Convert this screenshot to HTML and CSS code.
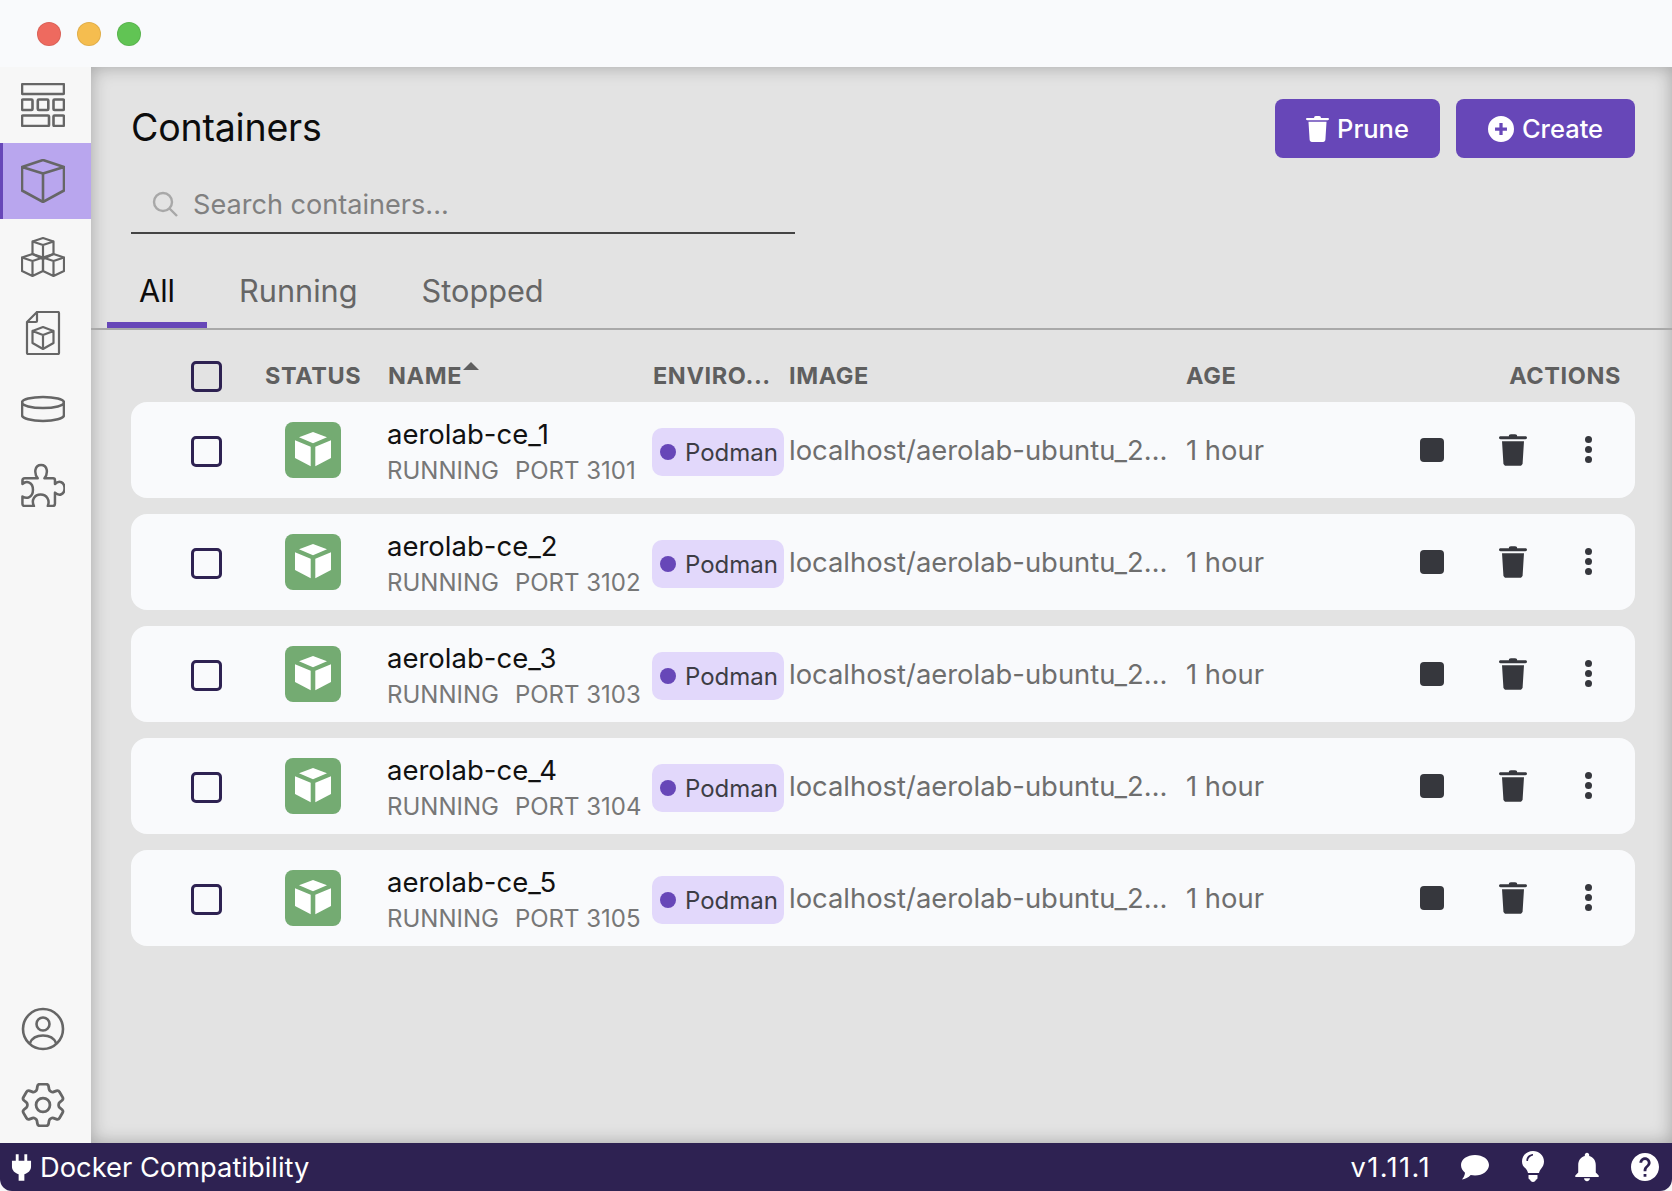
FILE: index.html
```html
<!DOCTYPE html>
<html lang="en">
<head>
    <meta charset="UTF-8">
    <title>Podman Desktop - Containers</title>
    <link rel="stylesheet" href="styles.css">
</head>
<body>
    <svg class="sprite" xmlns="http://www.w3.org/2000/svg">
        <symbol id="i-box" viewBox="0 0 36 35"><path d="M18 0l14 5.300-14 6-14-6zM0 8.300l15.700 6.400v19.600L0 26zM36 8.300l-15.700 6.400v19.600L36 26z"/></symbol>
        <symbol id="i-trash" viewBox="1.800 1.400 20.400 22" preserveAspectRatio="none"><path d="M9 2.600c0-.9.9-1.100 3-1.100s3 .2 3 1.100v.4h6c.8 0 1.200.5 1.200 1s-.4 1-1.200 1H3c-.8 0-1.200-.5-1.200-1s.4-1 1.200-1h6z"/><path d="M4 6.300h16l-1 15.200c-.1 1-.9 1.800-2 1.800H7c-1.100 0-1.900-.8-2-1.800z"/></symbol>
    </svg>

    <div class="titlebar">
        <span class="light light-red"></span>
        <span class="light light-yellow"></span>
        <span class="light light-green"></span>
    </div>

    <div class="app">
        <nav class="sidebar">
            <a class="nav-item">
                <svg class="nav-icon" viewBox="0 0 44 44"><rect x="1" y="1" width="42" height="10" rx="1"/><rect x="1" y="16.500" width="10.500" height="10.500" rx="1"/><rect x="16.800" y="16.500" width="10.500" height="10.500" rx="1"/><rect x="32.500" y="16.500" width="10.500" height="10.500" rx="1"/><rect x="1" y="32.500" width="27" height="10.500" rx="1"/><rect x="32.500" y="32.500" width="10.500" height="10.500" rx="1"/></svg>
            </a>
            <a class="nav-item nav-active">
                <svg class="nav-icon" viewBox="0 0 44 44"><path d="M22 1 43 8v23.500L22 43 1 31.500V8zM1 8l21 6.500L43 8M22 14.500V43"/></svg>
            </a>
            <a class="nav-item">
                <svg class="nav-icon thin" viewBox="0 0 44 44"><path d="M22 3 32.500 6.500v12.500L22 24 11.500 19V6.500zM11.500 6.500 22 10l10.500-3.500M22 10v14"/><path d="M11.500 19 22 22.500V36l-10.500 5L1 36V22.500zM1 22.500 11.500 26 22 22.500M11.500 26v15"/><path d="M32.500 19 43 22.500V36l-10.500 5L22 36V22.500zM22 22.500 32.500 26 43 22.500M32.500 26v15"/></svg>
            </a>
            <a class="nav-item">
                <svg class="nav-icon thin" viewBox="0 0 44 44"><path d="M16 1h21a1 1 0 0 1 1 1v40a1 1 0 0 1-1 1H7a1 1 0 0 1-1-1V11zM6 11h9a1 1 0 0 0 1-1V1"/><path d="M22 16l10.500 4v12L22 38l-10.500-6V20zM11.500 20 22 24l10.500-4M22 24v14"/></svg>
            </a>
            <a class="nav-item">
                <svg class="nav-icon" viewBox="0 0 44 44"><ellipse cx="22" cy="15.500" rx="21" ry="5.500"/><path d="M1 15.500V28c0 3.500 9.500 6 21 6s21-2.500 21-6V15.500"/></svg>
            </a>
            <a class="nav-item">
                <svg class="nav-icon" viewBox="0 1 44 46"><path d="M16.500 17C12.500 12 13 3 20 3s7.500 9 3.500 14h9q2 0 2 2v4c4.500-4.500 10-2 10 4.500s-5.500 8.500-10 4.500v11.500q0 2.500-2.500 2.500h-5c2.500-6-1-12-7.500-12s-10 6-7 12H3q-2.500 0-2.500-2.500V36c4.500 3 11 1 11-7s-6.500-10-11-6v-3.500Q.5 17 3 17z"/></svg>
            </a>
            <div class="nav-spacer"></div>
            <a class="nav-item">
                <svg class="nav-icon" viewBox="0 0 44 44"><circle cx="22" cy="22" r="20"/><circle cx="22" cy="17" r="6.500"/><path d="M9 36c2-5 7-7.500 13-7.500S33 31 35 36"/></svg>
            </a>
            <a class="nav-item">
                <svg class="nav-icon" viewBox="2.500 2.500 19 19"><path class="fine" d="M9.594 3.940c.09-.542.56-.94 1.110-.94h2.593c.55 0 1.020.398 1.110.94l.213 1.281c.063.374.313.686.645.87.074.04.147.083.22.127.324.196.72.257 1.075.124l1.217-.456a1.125 1.125 0 0 1 1.370.49l1.296 2.247a1.125 1.125 0 0 1-.26 1.431l-1.003.827c-.293.24-.438.613-.431.992a6.759 6.759 0 0 1 0 .255c-.007.378.138.75.43.99l1.005.828c.424.35.534.954.26 1.430l-1.298 2.247a1.125 1.125 0 0 1-1.369.491l-1.217-.456c-.355-.133-.75-.072-1.076.124a6.570 6.570 0 0 1-.22.128c-.331.183-.581.495-.644.869l-.213 1.280c-.09.543-.56.941-1.110.941h-2.594c-.55 0-1.020-.398-1.110-.94l-.213-1.281c-.062-.374-.312-.686-.644-.87a6.520 6.520 0 0 1-.22-.127c-.325-.196-.72-.257-1.076-.124l-1.217.456a1.125 1.125 0 0 1-1.369-.49l-1.297-2.247a1.125 1.125 0 0 1 .26-1.431l1.004-.827c.292-.24.437-.613.43-.992a6.932 6.932 0 0 1 0-.255c.007-.378-.138-.75-.43-.99l-1.004-.828a1.125 1.125 0 0 1-.26-1.430l1.297-2.247a1.125 1.125 0 0 1 1.370-.491l1.216.456c.356.133.751.072 1.076-.124.072-.044.146-.087.22-.128.332-.183.582-.495.644-.869z"/><circle class="fine" cx="12" cy="12" r="3"/></svg>
            </a>
        </nav>

        <main class="content">
            <div class="page-head">
                <h1 class="page-title">Containers</h1>
                <div class="head-buttons">
                    <button class="btn btn-prune"><svg class="btn-trash"><use href="#i-trash"/></svg>Prune</button>
                    <button class="btn btn-create">
                        <svg class="btn-icon" viewBox="0 0 24 24"><path fill-rule="evenodd" d="M12 0a12 12 0 1 1 0 24 12 12 0 0 1 0-24zm-1.500 6.500v4H6.500v3h4v4h3v-4h4v-3h-4v-4z"/></svg>Create
                    </button>
                </div>
            </div>

            <div class="search">
                <svg class="search-icon" viewBox="0 0 26 26"><circle cx="11" cy="11" r="9"/><path d="M17.500 17.500 25 25"/></svg>
                <span class="search-text">Search containers...</span>
            </div>

            <div class="tabs">
                <span class="tab tab-active">All</span>
                <span class="tab">Running</span>
                <span class="tab">Stopped</span>
            </div>

            <div class="table-head cols">
                <span class="check"></span>
                <span class="head-cell">STATUS</span>
                <span class="head-cell name-head">NAME<i class="sort-arrow"></i></span>
                <span class="head-cell">ENVIRO...</span>
                <span class="head-cell">IMAGE</span>
                <span class="head-cell">AGE</span>
                <span class="head-cell actions-head">ACTIONS</span>
            </div>

            <div class="rows">
                <div class="row cols">
                    <span class="check"></span>
                    <span class="status-icon"><svg><use href="#i-box"/></svg></span>
                    <div class="name-cell">
                        <div class="name">aerolab-ce_1</div>
                        <div class="sub"><span>RUNNING</span><span>PORT 3101</span></div>
                    </div>
                    <span class="badge"><i class="dot"></i>Podman</span>
                    <span class="image">localhost/aerolab-ubuntu_22.04:latest</span>
                    <span class="age">1 hour</span>
                    <div class="actions">
                        <i class="stop"></i>
                        <svg class="act-trash"><use href="#i-trash"/></svg>
                        <span class="kebab"><i></i><i></i><i></i></span>
                    </div>
                </div>
                <div class="row cols">
                    <span class="check"></span>
                    <span class="status-icon"><svg><use href="#i-box"/></svg></span>
                    <div class="name-cell">
                        <div class="name">aerolab-ce_2</div>
                        <div class="sub"><span>RUNNING</span><span>PORT 3102</span></div>
                    </div>
                    <span class="badge"><i class="dot"></i>Podman</span>
                    <span class="image">localhost/aerolab-ubuntu_22.04:latest</span>
                    <span class="age">1 hour</span>
                    <div class="actions">
                        <i class="stop"></i>
                        <svg class="act-trash"><use href="#i-trash"/></svg>
                        <span class="kebab"><i></i><i></i><i></i></span>
                    </div>
                </div>
                <div class="row cols">
                    <span class="check"></span>
                    <span class="status-icon"><svg><use href="#i-box"/></svg></span>
                    <div class="name-cell">
                        <div class="name">aerolab-ce_3</div>
                        <div class="sub"><span>RUNNING</span><span>PORT 3103</span></div>
                    </div>
                    <span class="badge"><i class="dot"></i>Podman</span>
                    <span class="image">localhost/aerolab-ubuntu_22.04:latest</span>
                    <span class="age">1 hour</span>
                    <div class="actions">
                        <i class="stop"></i>
                        <svg class="act-trash"><use href="#i-trash"/></svg>
                        <span class="kebab"><i></i><i></i><i></i></span>
                    </div>
                </div>
                <div class="row cols">
                    <span class="check"></span>
                    <span class="status-icon"><svg><use href="#i-box"/></svg></span>
                    <div class="name-cell">
                        <div class="name">aerolab-ce_4</div>
                        <div class="sub"><span>RUNNING</span><span>PORT 3104</span></div>
                    </div>
                    <span class="badge"><i class="dot"></i>Podman</span>
                    <span class="image">localhost/aerolab-ubuntu_22.04:latest</span>
                    <span class="age">1 hour</span>
                    <div class="actions">
                        <i class="stop"></i>
                        <svg class="act-trash"><use href="#i-trash"/></svg>
                        <span class="kebab"><i></i><i></i><i></i></span>
                    </div>
                </div>
                <div class="row cols">
                    <span class="check"></span>
                    <span class="status-icon"><svg><use href="#i-box"/></svg></span>
                    <div class="name-cell">
                        <div class="name">aerolab-ce_5</div>
                        <div class="sub"><span>RUNNING</span><span>PORT 3105</span></div>
                    </div>
                    <span class="badge"><i class="dot"></i>Podman</span>
                    <span class="image">localhost/aerolab-ubuntu_22.04:latest</span>
                    <span class="age">1 hour</span>
                    <div class="actions">
                        <i class="stop"></i>
                        <svg class="act-trash"><use href="#i-trash"/></svg>
                        <span class="kebab"><i></i><i></i><i></i></span>
                    </div>
                </div>
            </div>
        </main>
    </div>

    <footer class="statusbar">
        <svg class="plug" viewBox="0 0 22 28"><path d="M5 0h3v7h6V0h3v7h4v6c0 4-3 7-7 8v7h-6v-7c-4-1-7-4-7-8V7h4z"/></svg>
        <span class="compat">Docker Compatibility</span>
        <span class="version">v1.11.1</span>
        <svg class="foot-icon foot-comment" viewBox="0 0 28 25"><path d="M14 0c7.700 0 14 4.300 14 10s-6.300 10.500-14 10.500c-1.500 0-3-.2-4.300-.5-2.200 2.300-5.700 4.500-8.900 4.500 2-2.200 3-4.500 3.200-6.800C1.500 15.700 0 13 0 10 0 4.300 6.300 0 14 0z"/></svg>
        <svg class="foot-icon foot-bulb" viewBox="0 0 22 32"><path fill-rule="evenodd" d="M11 0c6 0 11 4.500 11 10.500 0 3-1.200 5-2.700 7-1 1.300-1.900 2.700-2.300 4.500H6c-.4-1.800-1.300-3.200-2.300-4.500C1.200 15.500 0 13.500 0 10.500 0 4.500 5 0 11 0zM6 10c0-2.700 2-5 5-5.500V3C6.500 3.500 4 6.500 4.500 10z"/><path d="M6.500 24h9v3c0 .8-.5 1.500-1.500 1.500-.3 1.500-1.500 2.500-3 2.500s-2.700-1-3-2.500c-1 0-1.500-.7-1.500-1.500z"/></svg>
        <svg class="foot-icon foot-bell" viewBox="4 2 16 20.500"><path d="M12 22c1.100 0 2-.9 2-2h-4c0 1.100.89 2 2 2zm6-6v-5c0-3.070-1.640-5.640-4.500-6.320V4c0-.83-.67-1.500-1.500-1.500s-1.500.67-1.500 1.500v.68C7.630 5.360 6 7.920 6 11v5l-2 2v1h16v-1l-2-2z"/></svg>
        <svg class="foot-icon foot-help" viewBox="2 2 20 20"><path d="M12 2C6.480 2 2 6.480 2 12s4.480 10 10 10 10-4.480 10-10S17.520 2 12 2zm1 17h-2v-2h2v2zm2.070-7.750-.9.92C13.450 12.900 13 13.500 13 15h-2v-.5c0-1.100.45-2.100 1.170-2.830l1.240-1.260c.37-.36.59-.86.59-1.410 0-1.100-.9-2-2-2s-2 .9-2 2H8c0-2.210 1.790-4 4-4s4 1.790 4 4c0 .88-.36 1.680-.93 2.250z"/></svg>
    </footer>
</body>
</html>
```
FILE: styles.css
```css
* {
    box-sizing: border-box;
}
html {
    background: #a9a9a9;
}
body {
    margin: 0;
    height: 1191px;
    display: flex;
    flex-direction: column;
    overflow: hidden;
    font-family: 'Inter', sans-serif;
    color: #666;
    background: #f7f7f7;
}
.sprite {
    display: none;
}

/* window chrome */
.titlebar {
    height: 67px;
    flex: none;
    display: flex;
    align-items: center;
    gap: 16px;
    padding-left: 37px;
    background: #f9fafc;
}
.light {
    width: 24px;
    height: 24px;
    border-radius: 50%;
    border: 1px solid rgba(0,0,0,0.08);
}
.light-red { background: #ee6a5f; }
.light-yellow { background: #f5bd4f; }
.light-green { background: #61c454; }

.app {
    flex: 1;
    display: flex;
    min-height: 0;
}

/* left nav */
.sidebar {
    width: 91px;
    flex: none;
    display: flex;
    flex-direction: column;
    background: #f7f7f7;
}
.nav-item {
    height: 76px;
    flex: none;
    display: flex;
    align-items: center;
    justify-content: center;
    padding-right: 5px;
}
.nav-active {
    background: #b9a6ee;
    border-left: 3px solid #6747b8;
    padding-right: 8px;
}
.nav-spacer {
    flex: 1;
}
.nav-icon {
    width: 44px;
    height: 44px;
    fill: none;
    stroke: #666;
    stroke-width: 2.6;
    stroke-linejoin: round;
    stroke-linecap: round;
}
.nav-icon.thin {
    stroke-width: 2.2;
}
.fine {
    stroke-width: 1.2;
}

/* main */
.content {
    flex: 1;
    min-width: 0;
    padding: 32px 37px 0 40px;
    background: #e3e3e3;
    box-shadow: inset 0 0 18px rgba(0,0,0,0.28);
}
.page-head {
    display: flex;
    justify-content: space-between;
    height: 59px;
}
.page-title {
    margin: 7px 0 0;
    font-size: 37.500px;
    line-height: 44px;
    font-weight: 400;
    color: #0c0c0c;
    letter-spacing: -0.2px;
}
.head-buttons {
    display: flex;
    gap: 16px;
}
.btn {
    height: 59px;
    display: flex;
    align-items: center;
    justify-content: center;
    gap: 8px;
    border: 0;
    border-radius: 8px;
    font: 500 25.500px 'Inter', sans-serif;
    color: #fff;
    background: #6747b8;
}
.btn-prune { width: 165px; }
.btn-create { width: 179px; }
.btn-icon {
    width: 26px;
    height: 26px;
    fill: #fff;
}
.btn-trash {
    width: 23px;
    height: 26px;
    fill: #fff;
}

.search {
    margin-top: 24px;
    width: 664px;
    height: 52px;
    display: flex;
    align-items: center;
    gap: 15px;
    padding: 0 0 6px 21px;
    border-bottom: 2px solid #444;
}
.search-icon {
    width: 26px;
    height: 26px;
    flex: none;
    fill: none;
    stroke: #a8a8a8;
    stroke-width: 2.4;
}
.search-text {
    font-size: 27.100px;
    color: #808080;
}

.tabs {
    margin: 25px -37px 0 -40px;
    height: 71px;
    display: flex;
    padding: 0 0 0 16px;
    border-bottom: 2px solid #a9a9a9;
}
.tab {
    padding: 12px 32px 0;
    line-height: 40px;
    font-size: 30.700px;
    color: #666;
}
.tab-active {
    width: 100px;
    padding: 12px 0 0;
    text-align: center;
    color: #0c0c0c;
    border-bottom: 6px solid #6747b8;
}

/* table */
.cols {
    display: grid;
    align-items: center;
}
.table-head {
    grid-template-columns: 134px 123px 265px 136px 397px 1fr 210px;
    height: 72px;
    padding-top: 18px;
    font-size: 23.500px;
    font-weight: 700;
    letter-spacing: 0.6px;
    color: #5f5f5f;
}
.table-head .check {
    margin-top: 2px;
}
.name-head {
    display: flex;
    align-items: flex-start;
    gap: 1px;
}
.sort-arrow {
    margin-top: 1px;
    width: 0;
    height: 0;
    border-left: 8px solid transparent;
    border-right: 8px solid transparent;
    border-bottom: 8px solid #5f5f5f;
}
.actions-head {
    text-align: right;
    padding-right: 14px;
}
.check {
    display: block;
    width: 31px;
    height: 31px;
    margin-left: 60px;
    border: 3px solid #2e2252;
    border-radius: 5px;
}
.rows {
    display: flex;
    flex-direction: column;
    gap: 16px;
}
.row {
    grid-template-columns: 134px 123px 265px 136px 397px 1fr 240px;
    height: 96px;
    border-radius: 16px;
    background: #f9fafc;
}
.row .check {
    margin-top: 2px;
}
.status-icon {
    width: 56px;
    height: 56px;
    margin-left: 20px;
    margin-top: -1px;
    display: flex;
    align-items: center;
    justify-content: center;
    border-radius: 8px;
    background: #74ab72;
}
.status-icon svg {
    width: 36px;
    height: 35px;
    fill: #fff;
}
.name-cell {
    margin-left: -1px;
    padding-top: 2px;
}
.name {
    font-size: 27.500px;
    line-height: 34px;
    color: #111;
}
.sub {
    display: flex;
    gap: 16px;
    margin-top: 6px;
    font-size: 24px;
    line-height: 28px;
    color: #777;
}
.badge {
    width: 132px;
    height: 48px;
    margin: 4px 0 0 -1px;
    display: flex;
    align-items: center;
    gap: 9px;
    padding: 0 0 0 8px;
    border-radius: 10px;
    font-size: 24px;
    color: #3d3d45;
    background: #e2d8fb;
}
.dot {
    width: 16px;
    height: 16px;
    border-radius: 50%;
    background: #6747b8;
}
.image {
    width: 385px;
    margin-top: -1px;
    white-space: nowrap;
    overflow: hidden;
    text-overflow: ellipsis;
    font-size: 27.400px;
    color: #6e6e6e;
}
.age {
    margin-top: -1px;
    font-size: 27.400px;
    color: #6e6e6e;
}
.actions {
    display: flex;
    align-items: center;
    margin-top: -1px;
    padding-left: 25px;
}
.stop {
    width: 24px;
    height: 24px;
    border-radius: 4px;
    background: #36373d;
}
.act-trash {
    width: 28px;
    height: 32px;
    margin-left: 55px;
    fill: #36373d;
}
.kebab {
    margin-left: 58px;
    display: flex;
    flex-direction: column;
    gap: 3px;
}
.kebab i {
    width: 7px;
    height: 7px;
    border-radius: 50%;
    background: #36373d;
}

/* bottom bar */
.statusbar {
    height: 48px;
    flex: none;
    display: flex;
    align-items: center;
    padding: 0 13px 0 11px;
    color: #fff;
    fill: #fff;
    font-size: 27.300px;
    background: #2e2252;
    border-radius: 0 0 12px 12px;
}
.plug {
    width: 21px;
    height: 27px;
}
.compat {
    margin-left: 8px;
    flex: 1;
}
.version {
    letter-spacing: 1.4px;
}
.foot-icon {
    flex: none;
}
.foot-comment { width: 28px; height: 25px; margin-left: 30px; }
.foot-bulb { width: 22px; height: 32px; margin-left: 33px; }
.foot-bell { width: 26px; height: 30px; margin-left: 30px; }
.foot-help { width: 28px; height: 28px; margin-left: 31px; }
```
